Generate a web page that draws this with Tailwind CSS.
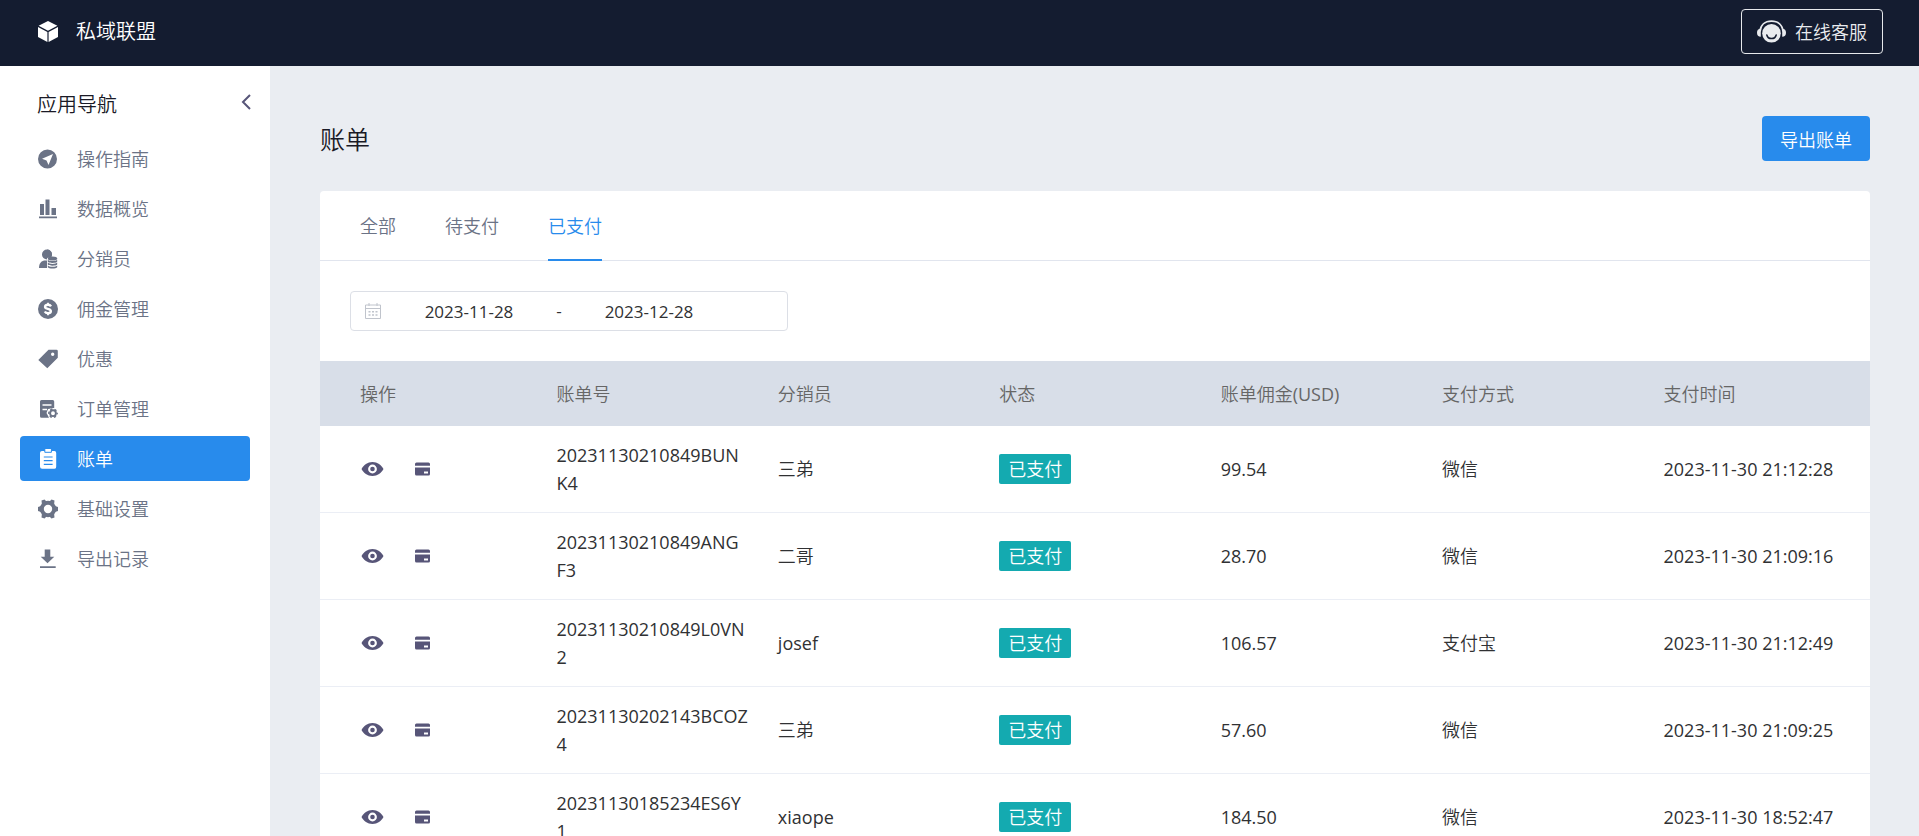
<!DOCTYPE html>
<html lang="zh-CN">
<head>
<meta charset="utf-8">
<meta name="viewport" content="width=device-width, initial-scale=1">
<title>账单</title>
<script src="https://cdn.jsdelivr.net/npm/@tailwindcss/browser@4"></script>
</head>
<body class="flex h-screen flex-col overflow-hidden bg-[#eaedf2] font-['Open_Sans','Noto_Sans_CJK_SC',sans-serif] text-[18px] leading-7 text-[#303133]">
<svg class="hidden" aria-hidden="true">
  <symbol id="eye" viewBox="0 0 24 16"><path fill="currentColor" fill-rule="evenodd" d="M12.500 1C7.500 1 3.700 4.200 1.500 8c2.200 3.800 6 7 11 7s8.800-3.200 11-7C21.300 4.200 17.500 1 12.500 1Zm0 2.600a4.400 4.400 0 1 1 0 8.800 4.400 4.400 0 0 1 0-8.800Z"/><circle cx="12.500" cy="8" r="2.300" fill="currentColor"/></symbol>
  <symbol id="card" viewBox="0 0 16 14"><path fill="currentColor" fill-rule="evenodd" d="M2.500.5h12A1.500 1.500 0 0 1 16 2v1.800H1V2A1.500 1.500 0 0 1 2.500.5ZM1 5.500h15V12a1.500 1.500 0 0 1-1.500 1.500h-12A1.500 1.500 0 0 1 1 12V5.500Zm9 4v2h4v-2h-4Z"/></symbol>
</svg>

<header class="flex h-[66px] shrink-0 items-center justify-between bg-[#141c30] pr-9 pb-[3px] pl-[38px] text-white">
  <a href="#" class="flex items-center gap-[18px] text-[20px] font-[350]">
    <svg class="h-[21px] w-5" viewBox="0 0 20 21" fill="currentColor" aria-hidden="true"><path d="M10 0l9.400 4.800L10 9.800.6 4.800zM0 6l9.400 5v10L0 16zM20 6l-9.400 5v10L20 16z"/></svg>
    <span>私域联盟</span>
  </a>
  <button type="button" class="flex h-[45px] items-center gap-[9px] rounded border border-[#e6e8eb] px-[15px] font-[350] text-[#e9ebee]">
    <svg class="h-6 w-[29px]" viewBox="0 0 29 24" aria-hidden="true"><path d="M3 11.500C3.500 5 8 1.200 14.500 1.200S25.500 5 26 11.500" fill="none" stroke="currentColor" stroke-width="1.800"/><path d="M3.800 8.700v8C1.300 16.700 0 15.200 0 12.700s1.300-4 3.800-4ZM25.200 8.700v8c2.500 0 3.800-1.500 3.800-4s-1.300-4-3.800-4Z" fill="currentColor"/><circle cx="14.500" cy="13.300" r="9.300" fill="currentColor"/><path d="M9.800 15c1.200 4.800 8.200 4.800 9.400 0" fill="none" stroke="#141c30" stroke-width="1.500" stroke-linecap="round"/></svg>
    <span>在线客服</span>
  </button>
</header>

<div class="flex min-h-0 flex-1">
  <aside class="w-[270px] shrink-0 bg-white pr-5 pl-5 font-[350]">
    <div class="flex h-[70px] items-center justify-between pt-2 pl-[17px]">
      <h2 class="text-[20px] text-[#1a1a26]">应用导航</h2>
      <button type="button" aria-label="收起" class="-mr-px pb-1.5 text-[#575578]"><svg class="h-4 w-[10px]" viewBox="0 0 10 16" fill="none" stroke="currentColor" stroke-width="2" aria-hidden="true"><path d="M9 1 2 8l7 7"/></svg></button>
    </div>
    <nav class="flex flex-col gap-[5px] text-[#6b7386]">
      <a href="#" class="flex h-[45px] items-center gap-[19px] rounded px-[18px]">
        <svg class="size-5" viewBox="0 0 20 20" aria-hidden="true"><path fill="currentColor" fill-rule="evenodd" d="M9.500.5a9.500 9.500 0 1 0 0 19 9.500 9.500 0 0 0 0-19ZM15 5l-4.500 11-2-4.500L4 9.700z"/></svg>
        <span>操作指南</span></a>
      <a href="#" class="flex h-[45px] items-center gap-[19px] rounded px-[18px]">
        <svg class="size-5" viewBox="0 0 20 20" fill="currentColor" aria-hidden="true"><path d="M2 5h4v11H2zM7.500.500h4V16h-4zM13.500 9H18v7h-4.500zM1 17.500h18v1.800H1z"/></svg>
        <span>数据概览</span></a>
      <a href="#" class="flex h-[45px] items-center gap-[19px] rounded px-[18px]">
        <svg class="size-5" viewBox="0 0 20 20" aria-hidden="true"><g fill="currentColor"><circle cx="9" cy="5.500" r="5"/><path d="M1 19c0-5 2.500-7.500 6.500-7.500h3V19z"/></g><path fill="#fff" d="M9 8.500h11V20H9z"/><g fill="currentColor"><path d="M9 .5a5 5 0 0 1 4.500 7L9 9z"/><ellipse cx="14.500" cy="9.500" rx="4.700" ry="2"/><path d="M9.800 10.700c1 1.700 8.400 1.700 9.400 0v2c-1 1.600-8.400 1.600-9.400 0zM9.800 13.600c1 1.700 8.400 1.700 9.400 0v2c-1 1.600-8.400 1.600-9.400 0zM9.800 16.500c1 1.700 8.400 1.700 9.400 0v1.800c-1 1.600-8.400 1.600-9.400 0z"/></g></svg>
        <span>分销员</span></a>
      <a href="#" class="flex h-[45px] items-center gap-[19px] rounded px-[18px]">
        <svg class="size-5" viewBox="0 0 20 20" aria-hidden="true"><circle cx="10" cy="10" r="10" fill="currentColor"/><path d="M13 7.300C12.300 6.100 11.200 5.800 10 5.800c-3.600 0-3.800 3.200-.9 3.900l1.500.4c3.300.9 2.800 4.100-.6 4.100-1.500 0-2.600-.5-3.200-1.700" fill="none" stroke="#fff" stroke-width="2.400"/><path d="M10 3.800V6m0 8v2.200" stroke="#fff" stroke-width="1.800"/></svg>
        <span>佣金管理</span></a>
      <a href="#" class="flex h-[45px] items-center gap-[19px] rounded px-[18px]">
        <svg class="size-5" viewBox="0 0 20 20" aria-hidden="true"><path fill="currentColor" fill-rule="evenodd" d="M10.500.800h8A1.300 1.300 0 0 1 19.800 2v6.700L9.300 19.300.3 11zM14.700 3.600a1.700 1.700 0 1 0 0 3.400 1.700 1.700 0 0 0 0-3.400Z"/></svg>
        <span>优惠</span></a>
      <a href="#" class="flex h-[45px] items-center gap-[19px] rounded px-[18px]">
        <svg class="size-5" viewBox="0 0 20 20" aria-hidden="true"><path fill="currentColor" d="M3.500 1h11.200A1.500 1.500 0 0 1 16.200 2.500V9L10 10l-1.500 4L11 18.800H3.500A1.500 1.500 0 0 1 2 17.300V2.500A1.500 1.500 0 0 1 3.500 1Z"/><path stroke="#fff" stroke-width="1.500" d="M4.500 6h9M4.500 10.500H9"/><circle cx="15" cy="14.200" r="5.200" fill="#fff"/><circle cx="15" cy="14.200" r="2.900" fill="none" stroke="currentColor" stroke-width="1.900"/><circle cx="15" cy="14.200" r="4.200" fill="none" stroke="currentColor" stroke-width="1.400" stroke-dasharray="2.200 2.198" stroke-dashoffset="1.100"/></svg>
        <span>订单管理</span></a>
      <a href="#" aria-current="page" class="flex h-[45px] items-center gap-[19px] rounded bg-[#288bec] px-[18px] text-white">
        <svg class="size-5" viewBox="0 0 20 20" aria-hidden="true"><path fill="currentColor" d="M4 2h12a2 2 0 0 1 2.200 2v13.500A2 2 0 0 1 16 19.700H4.200A2.200 2.200 0 0 1 2 17.500V4a2 2 0 0 1 2-2Z"/><path fill="#fff" stroke="#288bec" stroke-width="1" d="M6.800-.5h6.600v3.800H6.800z"/><path stroke="#288bec" stroke-width="1.200" d="M5.800 8h8.800M5.800 11.700h8.800M5.800 15.300h8.800"/></svg>
        <span>账单</span></a>
      <a href="#" class="flex h-[45px] items-center gap-[19px] rounded px-[18px]">
        <svg class="size-5" viewBox="0 0 20 20" aria-hidden="true"><circle cx="10" cy="10" r="6.200" fill="none" stroke="currentColor" stroke-width="4"/><path fill="currentColor" d="M0 8l3-1v6l-3-1zM20 8l-3-1v6l3-1zM3.500 1.500l3-1L9 3 4 6zM16.500 1.500l-3-1L11 3l5 3zM3.500 18.500l3 1L9 17l-5-3zM16.500 18.500l-3 1L11 17l5-3z"/></svg>
        <span>基础设置</span></a>
      <a href="#" class="flex h-[45px] items-center gap-[19px] rounded px-[18px]">
        <svg class="size-5" viewBox="0 0 20 20" fill="currentColor" aria-hidden="true"><path d="M6.700.500h5.600v7.200h4L9.500 14.300 2.700 7.700h4zM2 17.200h15.700V19H2z"/></svg>
        <span>导出记录</span></a>
    </nav>
  </aside>

  <main class="min-w-0 flex-1 pt-[50px] pr-[49px] pl-[50px]">
    <div class="mb-[30px] flex h-[45px] items-center justify-between">
      <h1 class="text-[25px] font-[350] text-[#1a1a26]">账单</h1>
      <button type="button" class="h-[45px] rounded bg-[#288bec] px-[18px] pt-0.5 font-[350] text-white">导出账单</button>
    </div>
    <section class="rounded-t bg-white">
      <div role="tablist" class="flex h-[70px] gap-[49px] border-b border-[#e1e5ee] px-10 font-[350] text-[#6b7386]">
        <button type="button" role="tab" class="h-[70px]">全部</button>
        <button type="button" role="tab" class="h-[70px]">待支付</button>
        <button type="button" role="tab" aria-selected="true" class="h-[70px] border-b-2 border-[#288bec] pt-0.5 text-[#288bec]">已支付</button>
      </div>
      <div class="px-[30px] py-[30px]">
        <div class="flex h-10 w-[438px] items-center rounded border border-[#dcdfe6] pl-3.5 text-[17px]">
          <svg class="mr-[7px] size-4" viewBox="0 0 16 16" fill="none" stroke="#c0c4cc" aria-hidden="true"><path d="M.5 2h15v13.500H.5zM.5 5.500h15M4 0v3M12 0v3"/><path stroke-width="1.400" stroke-dasharray="2 1.500" d="M3.500 8.700h9M3.500 12h9"/></svg>
          <input type="text" aria-label="开始日期" value="2023-11-28" class="w-[162px] bg-transparent pt-0.5 text-center">
          <span class="w-[18px] text-center">-</span>
          <input type="text" aria-label="结束日期" value="2023-12-28" class="w-[162px] bg-transparent pt-0.5 text-center">
        </div>
      </div>
      <table class="w-full table-fixed border-separate border-spacing-0 text-left">
        <thead class="bg-[#d8dee8] text-[#666]">
          <tr class="h-[65px] *:pl-[15px] *:font-[350] *:first:pl-10">
            <th scope="col">操作</th><th scope="col">账单号</th><th scope="col">分销员</th><th scope="col">状态</th><th scope="col">账单佣金<span class="font-normal">(USD)</span></th><th scope="col">支付方式</th><th scope="col">支付时间</th>
          </tr>
        </thead>
        <tbody class="whitespace-nowrap">
          <tr class="h-[87px] *:border-b *:border-[#ebeef5] *:pl-[15px] *:first:pl-10">
            <td><div class="flex items-center gap-[30px] text-[#575578]"><button type="button" aria-label="查看"><svg class="h-4 w-6"><use href="#eye"/></svg></button><button type="button" aria-label="支付"><svg class="h-3.5 w-4"><use href="#card"/></svg></button></div></td>
            <td>20231130210849BUN<br>K4</td><td class="font-[350]">三弟</td>
            <td><span class="flex h-[30px] w-fit items-center rounded-xs bg-[#14aab0] px-[9px] font-[350] text-white">已支付</span></td>
            <td>99.54</td><td class="font-[350]">微信</td><td>2023-11-30 21:12:28</td>
          </tr>
          <tr class="h-[87px] *:border-b *:border-[#ebeef5] *:pl-[15px] *:first:pl-10">
            <td><div class="flex items-center gap-[30px] text-[#575578]"><button type="button" aria-label="查看"><svg class="h-4 w-6"><use href="#eye"/></svg></button><button type="button" aria-label="支付"><svg class="h-3.5 w-4"><use href="#card"/></svg></button></div></td>
            <td>20231130210849ANG<br>F3</td><td class="font-[350]">二哥</td>
            <td><span class="flex h-[30px] w-fit items-center rounded-xs bg-[#14aab0] px-[9px] font-[350] text-white">已支付</span></td>
            <td>28.70</td><td class="font-[350]">微信</td><td>2023-11-30 21:09:16</td>
          </tr>
          <tr class="h-[87px] *:border-b *:border-[#ebeef5] *:pl-[15px] *:first:pl-10">
            <td><div class="flex items-center gap-[30px] text-[#575578]"><button type="button" aria-label="查看"><svg class="h-4 w-6"><use href="#eye"/></svg></button><button type="button" aria-label="支付"><svg class="h-3.5 w-4"><use href="#card"/></svg></button></div></td>
            <td>20231130210849L0VN<br>2</td><td>josef</td>
            <td><span class="flex h-[30px] w-fit items-center rounded-xs bg-[#14aab0] px-[9px] font-[350] text-white">已支付</span></td>
            <td>106.57</td><td class="font-[350]">支付宝</td><td>2023-11-30 21:12:49</td>
          </tr>
          <tr class="h-[87px] *:border-b *:border-[#ebeef5] *:pl-[15px] *:first:pl-10">
            <td><div class="flex items-center gap-[30px] text-[#575578]"><button type="button" aria-label="查看"><svg class="h-4 w-6"><use href="#eye"/></svg></button><button type="button" aria-label="支付"><svg class="h-3.5 w-4"><use href="#card"/></svg></button></div></td>
            <td>20231130202143BCOZ<br>4</td><td class="font-[350]">三弟</td>
            <td><span class="flex h-[30px] w-fit items-center rounded-xs bg-[#14aab0] px-[9px] font-[350] text-white">已支付</span></td>
            <td>57.60</td><td class="font-[350]">微信</td><td>2023-11-30 21:09:25</td>
          </tr>
          <tr class="h-[87px] *:border-b *:border-[#ebeef5] *:pl-[15px] *:first:pl-10">
            <td><div class="flex items-center gap-[30px] text-[#575578]"><button type="button" aria-label="查看"><svg class="h-4 w-6"><use href="#eye"/></svg></button><button type="button" aria-label="支付"><svg class="h-3.5 w-4"><use href="#card"/></svg></button></div></td>
            <td>20231130185234ES6Y<br>1</td><td>xiaope</td>
            <td><span class="flex h-[30px] w-fit items-center rounded-xs bg-[#14aab0] px-[9px] font-[350] text-white">已支付</span></td>
            <td>184.50</td><td class="font-[350]">微信</td><td>2023-11-30 18:52:47</td>
          </tr>
        </tbody>
      </table>
    </section>
  </main>
</div>
</body>
</html>
